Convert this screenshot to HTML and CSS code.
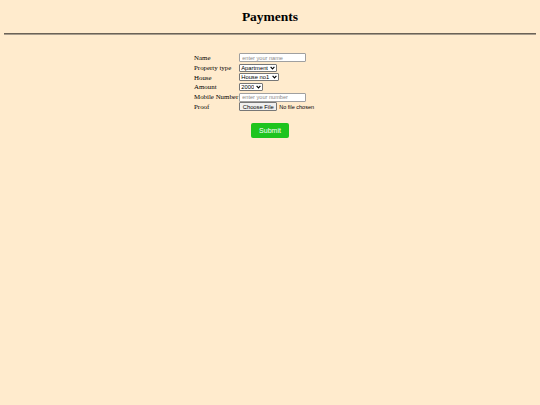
FILE: index.html
```html
<!DOCTYPE html>
<html lang="en">
<head>
    <meta charset="UTF-8">
    <meta name="viewport" content="width=device-width, initial-scale=1.0">
    <title>Payments</title>
    <link rel="stylesheet" href="styles.css">
</head>
<body>
    <h1 class="title">Payments</h1>
    <hr class="rule">

    <form class="pay-form" onsubmit="return false;">
        <div class="fields">
            <label class="lbl" for="name">Name</label>
            <input class="txt" type="text" id="name" placeholder="enter your name">

            <label class="lbl" for="ptype">Property type</label>
            <select class="sel" id="ptype">
                <option>Apartment</option>
                <option>Villa</option>
            </select>

            <label class="lbl" for="house">House</label>
            <select class="sel" id="house">
                <option>House no1</option>
                <option>House no2</option>
            </select>

            <label class="lbl" for="amount">Amount</label>
            <select class="sel" id="amount">
                <option>2000</option>
                <option>3000</option>
            </select>

            <label class="lbl" for="mobile">Mobile Number</label>
            <input class="txt" type="text" id="mobile" placeholder="enter your number">

            <label class="lbl" for="proof">Proof</label>
            <input class="file" type="file" id="proof">
        </div>

        <div class="actions">
            <button class="submit-btn" type="submit">Submit</button>
        </div>
    </form>
</body>
</html>
```

FILE: styles.css
```css
body {
    margin: 0;
    padding: 0 4px;
    background-color: #ffebcd;
    font-family: "Liberation Serif", "Times New Roman", serif;
    color: #000;
}
.title {
    margin: 0;
    padding-top: 10px;
    height: 21px;
    font-size: 13.5px;
    line-height: 14px;
    text-align: center;
}
.rule {
    margin: 2px 0 0;
    border: none;
    border-top: 1px solid #6b6256;
    border-bottom: 1px solid #a79c8c;
    height: 0;
}
.pay-form {
    margin-top: 18px;
}
.fields {
    display: grid;
    grid-template-columns: auto auto;
    grid-auto-rows: 9.8px;
    column-gap: 1px;
    justify-content: start;
    align-items: center;
    margin-left: 190px;
}
.lbl {
    font-size: 6.9px;
    line-height: 10px;
}
.txt {
    box-sizing: border-box;
    width: 67px;
    height: 9px;
    padding: 0 2px;
    border: 1px solid #a0a0a0;
    border-radius: 1px;
    background: #fff;
    font-family: "Liberation Sans", Arial, sans-serif;
    font-size: 5.6px;
    justify-self: start;
}
.txt::placeholder {
    color: #8a8a8a;
}
.sel {
    appearance: none;
    box-sizing: border-box;
    height: 8px;
    padding: 0 8px 0 1px;
    border: 1px solid #777;
    border-radius: 1px;
    background: #fff url("data:image/svg+xml,%3Csvg xmlns='http://www.w3.org/2000/svg' width='5' height='4' viewBox='0 0 5 4'%3E%3Cpath d='M0.6 0.8 L2.5 2.9 L4.4 0.8' fill='none' stroke='%23000' stroke-width='1.1'/%3E%3C/svg%3E") no-repeat right 1.5px center;
    font-family: "Liberation Sans", Arial, sans-serif;
    font-size: 5.8px;
    line-height: 6px;
    color: #000;
    justify-self: start;
}
.file {
    font-family: "Liberation Sans", Arial, sans-serif;
    font-size: 5.5px;
    justify-self: start;
}
.file::file-selector-button {
    height: 9px;
    padding: 0 2.5px;
    margin-right: 2px;
    border: 1px solid #777;
    border-radius: 1px;
    background: #efefef;
    font-size: 5.8px;
}
.actions {
    display: flex;
    justify-content: center;
    margin-top: 11px;
}
.submit-btn {
    width: 38px;
    height: 15px;
    padding: 0;
    border: none;
    border-radius: 2px;
    background-color: #1ec41e;
    color: #fff;
    font-family: "Liberation Sans", Arial, sans-serif;
    font-size: 7px;
    font-weight: normal;
    cursor: pointer;
}
```
